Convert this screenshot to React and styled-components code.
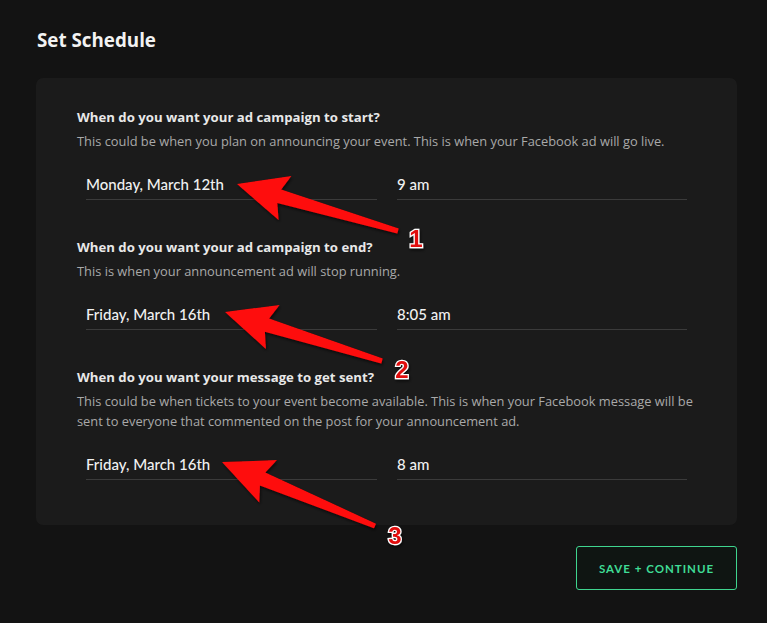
import React from "react";
import styled, { createGlobalStyle } from "styled-components";

const GlobalStyle = createGlobalStyle`
  html, body {
    margin: 0;
    padding: 0;
    background: #131313;
  }
  body {
    font-family: "Open Sans", "Lato", sans-serif;
    -webkit-font-smoothing: antialiased;
  }
`;

const sections = [
  {
    question: "When do you want your ad campaign to start?",
    description:
      "This could be when you plan on announcing your event. This is when your Facebook ad will go live.",
    date: "Monday, March 12th",
    time: "9 am",
  },
  {
    question: "When do you want your ad campaign to end?",
    description: "This is when your announcement ad will stop running.",
    date: "Friday, March 16th",
    time: "8:05 am",
  },
  {
    question: "When do you want your message to get sent?",
    description:
      "This could be when tickets to your event become available. This is when your Facebook message will be sent to everyone that commented on the post for your announcement ad.",
    date: "Friday, March 16th",
    time: "8 am",
  },
];

// annotation arrows drawn over the screenshot: tip, tail and label position
const arrows = [
  { tip: [237, 184], tail: [398, 231], label: "1", at: [416, 247] },
  { tip: [225, 312], tail: [382, 361], label: "2", at: [402, 378] },
  { tip: [222, 462], tail: [375, 526], label: "3", at: [395, 544] },
];

const arrowPoints = ({ tip, tail }) => {
  const dx = tail[0] - tip[0];
  const dy = tail[1] - tip[1];
  const len = Math.hypot(dx, dy);
  const ux = dx / len;
  const uy = dy / len;
  const nx = -uy;
  const ny = ux;
  const at = (along, side) => [
    tip[0] + ux * along + nx * side,
    tip[1] + uy * along + ny * side,
  ];
  const pts = [
    at(0, 0),
    at(50, -23),
    at(44, -7),
    at(len, -2.5),
    at(len, 2.5),
    at(44, 7),
    at(50, 23),
  ];
  return pts.map((p) => p.map((v) => v.toFixed(1)).join(",")).join(" ");
};

const Annotations = () => (
  <Overlay width="767" height="623" viewBox="0 0 767 623">
    <defs>
      <filter id="shade" x="-10%" y="-10%" width="120%" height="130%">
        <feDropShadow dx="1" dy="2" stdDeviation="1.5" floodColor="#000" floodOpacity="0.6" />
      </filter>
    </defs>
    {arrows.map((a) => (
      <g key={a.label} filter="url(#shade)">
        <polygon points={arrowPoints(a)} fill="#fe0b0b" />
        <Label x={a.at[0]} y={a.at[1]}>
          {a.label}
        </Label>
      </g>
    ))}
  </Overlay>
);

const App = () => {
  return (
    <>
      <GlobalStyle />
      <Page>
        <Title>Set Schedule</Title>
        <Card>
          {sections.map((s) => (
            <Section key={s.question}>
              <Question>{s.question}</Question>
              <Description>{s.description}</Description>
              <Fields>
                <Field>{s.date}</Field>
                <Field>{s.time}</Field>
              </Fields>
            </Section>
          ))}
        </Card>
        <Footer>
          <SaveButton>SAVE + CONTINUE</SaveButton>
        </Footer>
        <Annotations />
      </Page>
    </>
  );
};

export default App;

const Page = styled.div`
  position: relative;
  width: 767px;
  height: 623px;
  box-sizing: border-box;
  padding: 28px 30px 0 36px;
  overflow: hidden;
`;

const Title = styled.h1`
  margin: 0 0 26px 1px;
  font-size: 18.8px;
  line-height: 24px;
  font-weight: 700;
  color: #f2f2f2;
`;

const Card = styled.div`
  background: #1b1b1b;
  border-radius: 7px;
  padding: 30px 34px 45px 41px;
  display: flex;
  flex-direction: column;
  gap: 38px;
`;

const Section = styled.div`
  display: flex;
  flex-direction: column;
`;

const Question = styled.div`
  font-size: 13.2px;
  line-height: 18px;
  font-weight: 700;
  color: #e8e8e8;
  margin-bottom: 5px;
`;

const Description = styled.div`
  font-size: 12.85px;
  line-height: 20px;
  color: #a9a9a9;
  margin-bottom: 13px;
`;

const Fields = styled.div`
  display: grid;
  grid-template-columns: 291px 290px;
  column-gap: 20px;
  margin-left: 9px;
`;

const Field = styled.div`
  padding: 10px 0 5px;
  font-family: "Lato", sans-serif;
  font-size: 15px;
  line-height: 20px;
  font-weight: 500;
  color: #f1f1f1;
  border-bottom: 1px solid #3b3b3b;
`;

const Footer = styled.div`
  display: flex;
  justify-content: flex-end;
  margin-top: 21px;
`;

const SaveButton = styled.button`
  width: 161px;
  height: 44px;
  background: #0f1512;
  border: 1.5px solid #3fd58f;
  border-radius: 3px;
  color: #3fdc95;
  font-family: "Lato", sans-serif;
  font-size: 11.5px;
  font-weight: 700;
  letter-spacing: 1px;
  cursor: pointer;
`;

const Overlay = styled.svg`
  position: absolute;
  left: 0;
  top: 0;
  pointer-events: none;
`;

const Label = styled.text`
  font-family: "Liberation Sans", sans-serif;
  font-size: 24px;
  font-weight: 700;
  fill: #e10d0d;
  stroke: #ffffff;
  stroke-width: 2.5px;
  paint-order: stroke;
  text-anchor: middle;
`;
